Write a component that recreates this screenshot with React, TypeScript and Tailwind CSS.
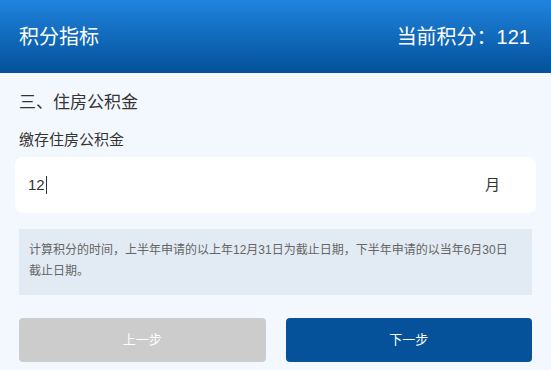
export default function App() {
  return (
    <div className="min-h-screen bg-[#f3f8fe] font-['Liberation_Sans','Noto_Sans_CJK_SC',sans-serif]">
      <header className="flex h-[73px] items-center justify-between bg-gradient-to-b from-[#1f84de] to-[#04519a] px-[19px] text-[20px] text-white">
        <span>积分指标</span>
        <span className="mr-[2px]">当前积分：121</span>
      </header>

      <main className="px-[18px] pt-[18px]">
        <h2 className="pl-[1px] text-[17px] leading-[24px] text-[#333]">三、住房公积金</h2>
        <div className="mt-[14px] pl-[1px] text-[15px] leading-[22px] text-[#333]">缴存住房公积金</div>

        <div className="-mx-[3px] mt-[6px] flex h-[56px] items-center justify-between rounded-[8px] bg-white pl-[13px] pr-[36px] text-[15px] text-[#333]">
          <span className="flex items-center">
            12
            <span className="ml-[1px] h-[18px] w-px bg-[#333]" />
          </span>
          <span>月</span>
        </div>

        <div className="mx-[1px] mt-[16px] h-[66px] bg-[#e2ebf3] pl-[10px] pr-[18px] pt-[11px] text-[12px] leading-[21px] text-[#666]">
          计算积分的时间，上半年申请的以上年12月31日为截止日期，下半年申请的以当年6月30日截止日期。
        </div>

        <div className="mx-[1px] mt-[23px] grid grid-cols-2 gap-[20px]">
          <button className="h-[44px] rounded-[4px] bg-[#cccccc] text-[13px] text-white">上一步</button>
          <button className="h-[44px] rounded-[4px] bg-[#05529a] text-[13px] text-white">下一步</button>
        </div>
      </main>
    </div>
  )
}
